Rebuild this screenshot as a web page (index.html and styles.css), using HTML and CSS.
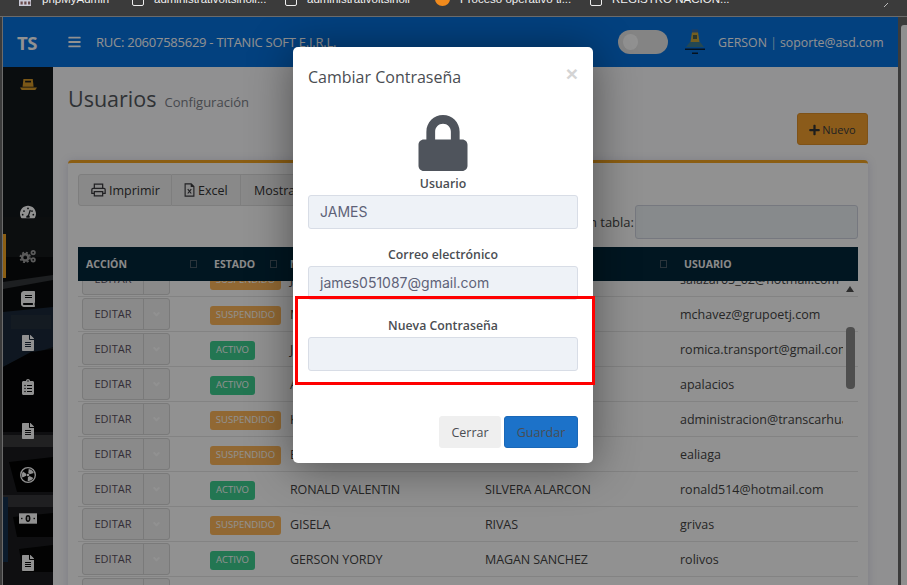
FILE: index.html
```html
<!DOCTYPE html>
<html lang="es">
<head>
  <meta charset="UTF-8" />
  <meta name="viewport" content="width=device-width, initial-scale=1.0"/>
  <title>Usuarios</title>
  <link rel="stylesheet" href="styles.css">
</head>
<body>
  <div class="bookmarks">
    <span class="bm bm-pma"><svg class="pma-icon" viewBox="0 0 16 8"><rect width="16" height="8" fill="#c9c9d6"/><rect x="2" y="2" width="3" height="4" fill="#6a4a4a"/><rect x="7" y="2" width="3" height="4" fill="#6a4a4a"/><rect x="12" y="2" width="3" height="4" fill="#6a4a4a"/></svg>phpMyAdmin</span>
    <span class="bm bm-a"><i class="bm-page"></i>administrativoitsinoli...</span>
    <span class="bm bm-b"><i class="bm-page"></i>administrativoitsinoli</span>
    <span class="bm bm-c"><i class="bm-dot"></i>Proceso operativo ti...</span>
    <span class="bm bm-d"><i class="bm-page"></i>REGISTRO NACION...</span>
    <svg class="bm-more" viewBox="0 0 8 8"><path d="M1 7 5 3" fill="none" stroke="#bbb" stroke-width="1"/></svg>
  </div>

  <div class="window">
    <div class="page">
      <header class="topbar">
        <div class="brand">TS</div>
        <svg class="burger" viewBox="0 0 448 512"><path d="M16 132h416c9 0 16-7 16-16V76c0-9-7-16-16-16H16C7 60 0 67 0 76v40c0 9 7 16 16 16zm0 160h416c9 0 16-7 16-16v-40c0-9-7-16-16-16H16c-9 0-16 7-16 16v40c0 9 7 16 16 16zm0 160h416c9 0 16-7 16-16v-40c0-9-7-16-16-16H16c-9 0-16 7-16 16v40c0 9 7 16 16 16z"/></svg>
        <div class="ruc">RUC: 20607585629 - TITANIC SOFT E.I.R.L.</div>
        <div class="toggle"><span class="knob"></span></div>
        <svg class="avatar" viewBox="0 0 24 26"><path d="M9 3h6l1.500 10h-9z" fill="#cda83a"/><rect x="9" y="0.500" width="6" height="3" fill="#3a6ea8"/><rect x="10" y="6" width="4" height="4" fill="#4d5f4a"/><path d="M7 13h10l4 5H3z" fill="#3f7f95"/><rect x="2" y="19.500" width="20" height="1.500" fill="#0a2038"/><rect x="9" y="23.500" width="6" height="1.500" fill="#0a2038"/></svg>
        <div class="who">GERSON <span class="sep">|</span> soporte@asd.com</div>
      </header>

      <div class="body">
        <aside class="side">
          <svg class="side-photo" viewBox="0 0 50 518" preserveAspectRatio="none">
            <rect width="50" height="518" fill="#13171b"/>
            <path d="M0 150H50V190H0z" fill="#16191c"/>
            <path d="M0 190H50V260H0z" fill="#0a0c0e"/>
            <path d="M0 215 50 208V213L0 222z" fill="#34373a"/>
            <path d="M0 245 50 240V280L20 290 0 300z" fill="#1b2a3a"/>
            <path d="M8 248H48V262H8z" fill="#24313c"/>
            <path d="M0 300 28 285 50 282V365H0z" fill="#050506"/>
            <path d="M0 365H50V518H0z" fill="#1b1c1f"/>
            <path d="M0 368H50V380H0z" fill="#3a3b3d"/>
            <path d="M6 395 50 390V425H14z" fill="#030303"/>
            <path d="M0 428H50V440H0z" fill="#37383a"/>
            <path d="M10 450 50 446V470H14z" fill="#050505"/>
            <path d="M16 482 50 478V505H20z" fill="#060606"/>
            <path d="M0 430H5V495H0z" fill="#14304e"/>
          </svg>
          <svg class="ico ico-ship" viewBox="0 0 20 16"><path d="M4 1h11l1 9H3z" fill="#d69a2a"/><rect x="6" y="3" width="7" height="2" fill="#1a1c1e"/><path d="M0 11h20l-2 3H2z" fill="#d69a2a"/></svg>
          <svg class="ico" viewBox="0 0 576 512"><path d="M288 32C129 32 0 161 0 320c0 53 14 102 39 145 6 9 16 15 27 15h444c11 0 21-6 27-15 25-43 39-92 39-145 0-159-129-288-288-288zm0 64c18 0 32 14 32 32s-14 32-32 32-32-14-32-32 14-32 32-32zM96 384c-18 0-32-14-32-32s14-32 32-32 32 14 32 32-14 32-32 32zm48-128c-18 0-32-14-32-32s14-32 32-32 32 14 32 32-14 32-32 32zm246-56-61 185c14 12 23 29 23 49 0 12-3 23-9 32H233c-6-9-9-20-9-32 0-35 28-63 63-64l61-185c3-8 12-13 20-10 9 3 14 12 12 20zM432 192c18 0 32 14 32 32s-14 32-32 32-32-14-32-32 14-32 32-32zm48 192c-18 0-32-14-32-32s14-32 32-32 32 14 32 32-14 32-32 32z"/></svg>
          <div class="side-active"><svg class="ico ico-dim" viewBox="0 0 26 20"><g fill="none" stroke="currentColor"><circle cx="9" cy="12" r="4.500" stroke-width="3.500"/><circle cx="9" cy="12" r="7" stroke-width="2.500" stroke-dasharray="3 2.500"/><circle cx="20.500" cy="5" r="2.500" stroke-width="2.500"/><circle cx="20.500" cy="15.500" r="2.500" stroke-width="2.500"/></g></svg></div>
          <svg class="ico" viewBox="0 0 448 512"><path d="M448 360V24c0-13-11-24-24-24H96C43 0 0 43 0 96v320c0 53 43 96 96 96h328c13 0 24-11 24-24v-16c0-8-3-14-9-19-4-15-4-59 0-73 6-5 9-11 9-20zM128 134c0-3 3-6 6-6h212c3 0 6 3 6 6v20c0 3-3 6-6 6H134c-3 0-6-3-6-6v-20zm0 64c0-3 3-6 6-6h212c3 0 6 3 6 6v20c0 3-3 6-6 6H134c-3 0-6-3-6-6v-20zm253 250H96c-18 0-32-14-32-32s14-32 32-32h285c-2 17-2 47 0 64z"/></svg>
          <svg class="ico" viewBox="0 0 384 512"><use href="#file-alt"/></svg>
          <svg class="ico" viewBox="0 0 384 512"><path d="M336 64h-80c0-35-29-64-64-64s-64 29-64 64H48C21 64 0 85 0 112v352c0 27 21 48 48 48h288c27 0 48-21 48-48V112c0-27-21-48-48-48zM96 424c-13 0-24-11-24-24s11-24 24-24 24 11 24 24-11 24-24 24zm0-96c-13 0-24-11-24-24s11-24 24-24 24 11 24 24-11 24-24 24zm0-96c-13 0-24-11-24-24s11-24 24-24 24 11 24 24-11 24-24 24zm96-192c13 0 24 11 24 24s-11 24-24 24-24-11-24-24 11-24 24-24zm128 368c0 4-4 8-8 8H168c-4 0-8-4-8-8v-16c0-4 4-8 8-8h144c4 0 8 4 8 8v16zm0-96c0 4-4 8-8 8H168c-4 0-8-4-8-8v-16c0-4 4-8 8-8h144c4 0 8 4 8 8v16zm0-96c0 4-4 8-8 8H168c-4 0-8-4-8-8v-16c0-4 4-8 8-8h144c4 0 8 4 8 8v16z"/></svg>
          <svg class="ico" viewBox="0 0 384 512"><use href="#file-alt"/></svg>
          <svg class="ico" viewBox="0 0 24 24"><circle cx="12" cy="12" r="11" fill="none" stroke="currentColor" stroke-width="2"/><circle cx="12" cy="12" r="2"/><circle cx="12" cy="12" r="6" fill="none" stroke="currentColor" stroke-width="6.500" stroke-dasharray="6.300 6.270" stroke-dashoffset="9.400"/></svg>
          <svg class="ico ico-money" viewBox="0 0 26 15"><rect width="26" height="15"/><ellipse cx="13" cy="7.500" rx="3.500" ry="5" fill="#111"/><rect x="12" y="5" width="2" height="5"/><rect x="3" y="6.500" width="2" height="2" fill="#111"/><rect x="21" y="6.500" width="2" height="2" fill="#111"/></svg>
          <svg class="ico" viewBox="0 0 384 512"><use href="#file-alt"/></svg>
        </aside>

        <main class="main">
          <div class="title-row">
            <div class="titles"><h1>Usuarios</h1><small>Configuración</small></div>
            <button class="btn-new"><svg class="plus" viewBox="0 0 448 512"><path d="M416 208H272V64c0-18-14-32-32-32h-32c-18 0-32 14-32 32v144H32c-18 0-32 14-32 32v32c0 18 14 32 32 32h144v144c0 18 14 32 32 32h32c18 0 32-14 32-32V304h144c18 0 32-14 32-32v-32c0-18-14-32-32-32z"/></svg>Nuevo</button>
          </div>

          <section class="card">
            <div class="toolbar">
              <div class="tools">
                <button class="tool tool-print"><svg class="tool-ico" viewBox="0 0 18 16"><path d="M4 6V1h10v5M4 12H1V7.500C1 6.700 1.700 6 2.500 6h13c.8 0 1.500.7 1.500 1.500V12h-3M4 10h10v5H4z" fill="none" stroke="#3a3a3e" stroke-width="1.500"/></svg>Imprimir</button>
                <button class="tool tool-excel"><svg class="tool-ico tool-ico-x" viewBox="0 0 12 16"><path d="M1 1h7l3 3v11H1zM8 1v3h3" fill="none" stroke="#3a3a3e" stroke-width="1.300"/><path d="M4 7l4 5M8 7l-4 5" stroke="#3a3a3e" stroke-width="1.300"/></svg>Excel</button>
                <button class="tool tool-show">Mostrar 10 registros</button>
              </div>
              <label class="search">Buscar en tabla:<input class="search-input" type="text"></label>
            </div>

            <div class="grid">
              <div class="grid-rows">
                <div class="row"><div class="c-acc"><div class="split"><span class="split-main">EDITAR</span><span class="split-caret"><i></i></span></div></div><div class="c-est"><span class="badge off">SUSPENDIDO</span></div><div class="c-nom">JORGE</div><div class="c-ape">SALAZAR</div><div class="c-usr">salazar05_02@hotmail.com</div></div>
                <div class="row"><div class="c-acc"><div class="split"><span class="split-main">EDITAR</span><span class="split-caret"><i></i></span></div></div><div class="c-est"><span class="badge off">SUSPENDIDO</span></div><div class="c-nom">MARIA</div><div class="c-ape">CHAVEZ PRADO</div><div class="c-usr">mchavez@grupoetj.com</div></div>
                <div class="row"><div class="c-acc"><div class="split"><span class="split-main">EDITAR</span><span class="split-caret"><i></i></span></div></div><div class="c-est"><span class="badge on">ACTIVO</span></div><div class="c-nom">JUAN</div><div class="c-ape">ROMERO</div><div class="c-usr">romica.transport@gmail.com</div></div>
                <div class="row"><div class="c-acc"><div class="split"><span class="split-main">EDITAR</span><span class="split-caret"><i></i></span></div></div><div class="c-est"><span class="badge on">ACTIVO</span></div><div class="c-nom">ANA</div><div class="c-ape">PALACIOS</div><div class="c-usr">apalacios</div></div>
                <div class="row"><div class="c-acc"><div class="split"><span class="split-main">EDITAR</span><span class="split-caret"><i></i></span></div></div><div class="c-est"><span class="badge off">SUSPENDIDO</span></div><div class="c-nom">KAREN</div><div class="c-ape">HUAMAN</div><div class="c-usr">administracion@transcarhuaz.com</div></div>
                <div class="row"><div class="c-acc"><div class="split"><span class="split-main">EDITAR</span><span class="split-caret"><i></i></span></div></div><div class="c-est"><span class="badge off">SUSPENDIDO</span></div><div class="c-nom">ELENA</div><div class="c-ape">ALIAGA</div><div class="c-usr">ealiaga</div></div>
                <div class="row"><div class="c-acc"><div class="split"><span class="split-main">EDITAR</span><span class="split-caret"><i></i></span></div></div><div class="c-est"><span class="badge on">ACTIVO</span></div><div class="c-nom">RONALD VALENTIN</div><div class="c-ape">SILVERA ALARCON</div><div class="c-usr">ronald514@hotmail.com</div></div>
                <div class="row"><div class="c-acc"><div class="split"><span class="split-main">EDITAR</span><span class="split-caret"><i></i></span></div></div><div class="c-est"><span class="badge off">SUSPENDIDO</span></div><div class="c-nom">GISELA</div><div class="c-ape">RIVAS</div><div class="c-usr">grivas</div></div>
                <div class="row"><div class="c-acc"><div class="split"><span class="split-main">EDITAR</span><span class="split-caret"><i></i></span></div></div><div class="c-est"><span class="badge on">ACTIVO</span></div><div class="c-nom">GERSON YORDY</div><div class="c-ape">MAGAN SANCHEZ</div><div class="c-usr">rolivos</div></div>
                <div class="row"><div class="c-acc"><div class="split"><span class="split-main">EDITAR</span><span class="split-caret"><i></i></span></div></div></div>
              </div>
              <div class="grid-head">
                <div class="h-acc">ACCIÓN<i class="sort"></i></div>
                <div class="h-est">ESTADO<i class="sort"></i></div>
                <div class="h-nom">NOMBRES<i class="sort"></i></div>
                <div class="h-ape">APELLIDOS<i class="sort"></i></div>
                <div class="h-usr">USUARIO</div>
              </div>
              <div class="vscroll"><span class="vscroll-up"></span><span class="vscroll-thumb"></span></div>
            </div>
          </section>
        </main>
      </div>

      <div class="backdrop">
        <div class="modal">
          <div class="modal-head">
            <h4>Cambiar Contraseña</h4>
            <span class="close">×</span>
          </div>
          <svg class="lock" viewBox="0 0 448 512"><path d="M400 224h-24v-72C376 68.2 307.8 0 224 0S72 68.2 72 152v72H48c-26.5 0-48 21.5-48 48v192c0 26.5 21.5 48 48 48h352c26.5 0 48-21.5 48-48V272c0-26.5-21.500-48-48-48zm-104 0H152v-72c0-39.700 32.300-72 72-72s72 32.300 72 72v72z"/></svg>
          <div class="field">
            <label>Usuario</label>
            <div class="input">JAMES</div>
          </div>
          <div class="field">
            <label>Correo electrónico</label>
            <div class="input">james051087@gmail.com</div>
          </div>
          <div class="field">
            <label>Nueva Contraseña</label>
            <div class="input"></div>
          </div>
          <div class="modal-foot">
            <button class="btn-close">Cerrar</button>
            <button class="btn-save">Guardar</button>
          </div>
          <div class="mark"></div>
        </div>
      </div>
    </div>
    <div class="browser-scroll"><span class="browser-thumb"></span></div>
  </div>

  <svg class="defs" width="0" height="0"><defs><path id="file-alt" d="M224 136V0H24C10.700 0 0 10.700 0 24v464c0 13.300 10.700 24 24 24h336c13.300 0 24-10.700 24-24V160H248c-13.200 0-24-10.800-24-24zm64 236c0 6.600-5.400 12-12 12H108c-6.600 0-12-5.400-12-12v-8c0-6.600 5.400-12 12-12h168c6.600 0 12 5.400 12 12v8zm0-64c0 6.600-5.400 12-12 12H108c-6.600 0-12-5.400-12-12v-8c0-6.600 5.400-12 12-12h168c6.600 0 12 5.400 12 12v8zm0-72v8c0 6.600-5.400 12-12 12H108c-6.600 0-12-5.400-12-12v-8c0-6.600 5.400-12 12-12h168c6.600 0 12 5.400 12 12zm96-114.100v6.100H256V0h6.100c6.400 0 12.500 2.500 17 7l97.900 98c4.500 4.500 7 10.600 7 16.900z"/></defs></svg>
</body>
</html>
```

FILE: styles.css
```css
* {
  box-sizing: border-box;
}

html, body {
  margin: 0;
  height: 100%;
  overflow: hidden;
}

body {
  font-family: "Noto Sans", Arial, sans-serif;
  font-size: 13px;
  background: #3b3b3b;
  display: flex;
  flex-direction: column;
}

button {
  font-family: inherit;
}

.defs {
  position: absolute;
}

/* browser bookmarks bar */
.bookmarks {
  height: 17px;
  flex: none;
  background: #3b3b3b;
  border-bottom: 1px solid #6b6b6b;
  overflow: hidden;
  display: flex;
  font-family: "Liberation Sans", Arial, sans-serif;
  font-size: 11.500px;
  color: #f0f0f0;
}

.bm {
  display: flex;
  align-items: center;
  height: 14px;
  margin-top: -8px;
  white-space: nowrap;
  flex: none;
}

.bm-pma { margin-left: 17px; width: 115px; }
.bm-a { width: 153px; }
.bm-b { width: 150px; }
.bm-c { width: 155px; }
.bm-d { width: 290px; }

.pma-icon {
  width: 16px;
  height: 6px;
  margin-right: 9px;
  align-self: flex-end;
}

.bm-page {
  width: 12px;
  height: 13px;
  border: 1px solid #eee;
  border-radius: 2px;
  margin-right: 10px;
  flex: none;
}

.bm-dot {
  width: 15px;
  height: 14px;
  border-radius: 50%;
  background: #f08a1d;
  margin-right: 10px;
  flex: none;
}

.bm-more {
  width: 8px;
  height: 8px;
  flex: none;
  margin-left: 3px;
}

/* page */
.window {
  flex: 1;
  display: flex;
  min-height: 0;
  padding-left: 2px;
}

.page {
  flex: 1;
  min-width: 0;
  display: flex;
  flex-direction: column;
  position: relative;
  overflow: hidden;
  border-left: 1px solid #6b6b6b;
}

.browser-scroll {
  width: 9px;
  flex: none;
  background: #3b3b3b;
  padding-left: 3px;
}

.browser-thumb {
  display: block;
  height: 100%;
  margin-top: 8px;
  background: #8f8f8f;
  border-radius: 3px 0 0 0;
}

.topbar {
  height: 50px;
  flex: none;
  background: #0772df;
  display: flex;
  align-items: center;
  color: #fff;
}

.brand {
  width: 65px;
  padding-left: 14px;
  font-size: 18.500px;
  font-weight: 700;
  letter-spacing: -.5px;
  font-family: "Open Sans", sans-serif;
  color: #fff;
}

.burger {
  width: 13px;
  height: 14px;
  fill: #fff;
  margin-right: 15px;
}

.ruc {
  font-size: 13px;
  flex: 1;
  font-family: "Open Sans", sans-serif;
  letter-spacing: -.25px;
}

.toggle {
  width: 50px;
  height: 24px;
  border-radius: 12px;
  background: #e8e8e8;
  padding: 3px 0 0 5px;
  margin-right: 15px;
}

.knob {
  display: block;
  width: 15px;
  height: 16px;
  margin-top: 1px;
  border-radius: 50%;
  background: #fff;
}

.avatar {
  width: 24px;
  height: 26px;
  margin-right: 11px;
}

.who {
  font-family: "Open Sans", sans-serif;
  font-size: 12.300px;
  width: 180px;
  white-space: nowrap;
}

.sep {
  font-weight: 300;
}

.body {
  flex: 1;
  display: flex;
  min-height: 0;
}

.side {
  width: 50px;
  flex: none;
  position: relative;
  overflow: hidden;
  background: #13171b;
  display: flex;
  flex-direction: column;
  align-items: center;
  color: #fff;
  padding-top: 11px;
}

.side-photo {
  position: absolute;
  left: 0;
  top: 0;
  width: 50px;
  height: 518px;
}

.ico {
  position: relative;
  width: 16px;
  height: 16px;
  fill: currentColor;
  margin-bottom: 28px;
  flex: none;
}

.ico-ship {
  width: 17px;
  height: 14px;
  margin-bottom: 112px;
}

.ico-dim {
  color: #a0a0a0;
  width: 18px;
  margin: 0;
}

.ico-money {
  width: 18px;
  height: 13px;
  margin: 1px 0 30px;
}

.side-active {
  position: relative;
  align-self: stretch;
  height: 44px;
  margin: -14px 0 13px;
  border-left: 3px solid #f5a623;
  display: flex;
  align-items: center;
  justify-content: center;
  padding-right: 3px;
  flex: none;
}

.main {
  flex: 1;
  min-width: 0;
  background: #fdfdff;
  padding: 0 30px 0 15px;
}

.title-row {
  height: 93px;
  display: flex;
  justify-content: space-between;
  padding-top: 17px;
}

.titles {
  display: flex;
  align-items: baseline;
  height: 30px;
  gap: 8px;
  color: #54585e;
}

.titles h1 {
  margin: 0;
  font-size: 21.500px;
  font-weight: 400;
  font-family: "Open Sans", sans-serif;
}

.titles small {
  font-size: 13px;
  color: #7c8088;
  font-family: "Open Sans", sans-serif;
}

.btn-new {
  width: 71px;
  height: 32px;
  margin-top: 29px;
  background: #f4a12e;
  border: 1px solid #e0902a;
  border-radius: 3px;
  color: #3a3a3e;
  font-size: 11px;
  padding: 0;
  font-family: "Open Sans", sans-serif;
}

.plus {
  width: 11px;
  height: 12px;
  fill: #333;
  vertical-align: -2px;
  margin-right: 2px;
}

.card {
  height: 500px;
  background: #fff;
  border-top: 3px solid #f5a623;
  border-radius: 4px 4px 0 0;
  padding: 11px 10px 0;
  box-shadow: 0 1px 10px rgba(60, 60, 120, .18);
}

.toolbar {
  height: 73px;
  display: flex;
  justify-content: space-between;
}

.tools {
  display: flex;
  height: 32px;
}

.tool {
  height: 32px;
  background: #f1f1f1;
  border: 1px solid #dedede;
  border-left-width: 0;
  font-size: 12.500px;
  color: #333;
  padding: 0;
  font-family: "Open Sans", sans-serif;
  white-space: nowrap;
  text-align: left;
  display: flex;
  align-items: center;
}

.tool-print { width: 94px; border-left-width: 1px; border-radius: 3px 0 0 3px; padding-left: 12px; }
.tool-excel { width: 69px; padding-left: 12px; }
.tool-show { width: 150px; padding-left: 13px; }

.tool-ico {
  width: 15px;
  height: 14px;
  margin-right: 3px;
}

.tool-ico-x {
  width: 11px;
}

.search {
  align-self: flex-end;
  display: flex;
  align-items: center;
  font-family: "Open Sans", sans-serif;
  color: #444;
  margin-bottom: 8px;
  height: 34px;
}

.search-input {
  width: 223px;
  height: 34px;
  margin-left: 1px;
  border: 1px solid #d0d4e0;
  border-radius: 3px;
  background: #eef2f7;
}

.grid {
  position: relative;
  height: 340px;
  overflow: hidden;
}

.grid-head {
  position: absolute;
  left: 0;
  top: 0;
  right: 0;
  height: 34px;
  background: #03273a;
  color: #f2f2f2;
  font-size: 10.500px;
  font-weight: 700;
  display: flex;
  align-items: center;
  font-family: "Open Sans", sans-serif;
}

.grid-head > div {
  display: flex;
  align-items: center;
  justify-content: space-between;
  padding-left: 8px;
  flex: none;
}

.sort {
  width: 7px;
  height: 8px;
  border: 1px solid #4a5c68;
}

.h-acc { width: 128px; padding-right: 9px; }
.h-est { width: 76px; padding-right: 5px; }
.h-nom { width: 195px; padding-right: 5px; }
.h-ape { width: 195px; padding-right: 5px; }
.h-usr { flex: 1 !important; padding-left: 12px !important; }

.grid-rows {
  padding-top: 15px;
}

.row {
  height: 35px;
  border-bottom: 1px solid #e6e6e6;
  display: flex;
  align-items: center;
  font-family: "Open Sans", sans-serif;
  font-size: 12.500px;
  color: #444;
  white-space: nowrap;
}

.c-acc { width: 128px; padding-left: 4px; }
.c-est { width: 76px; padding-left: 4px; padding-top: 1px; }
.c-nom { width: 195px; padding-left: 8px; letter-spacing: -.1px; }
.c-ape { width: 195px; padding-left: 8px; letter-spacing: -.1px; }
.c-usr { width: 171px; padding-left: 8px; overflow: hidden; }

.split {
  width: 88px;
  height: 32px;
  display: flex;
  border: 1px solid #d6d6d6;
  border-radius: 3px;
  background: #f2f2f2;
  font-size: 11px;
  color: #5a5060;
}

.split-main {
  width: 61px;
  text-align: center;
  line-height: 30px;
  border-right: 1px solid #d6d6d6;
}

.split-caret {
  flex: 1;
  display: flex;
  align-items: center;
  justify-content: center;
}

.split-caret i {
  width: 5px;
  height: 5px;
  border: solid #fff;
  border-width: 0 2px 2px 0;
  transform: rotate(45deg) translate(-1px, -1px);
}

.badge {
  display: inline-block;
  height: 19px;
  line-height: 18px;
  border-radius: 3px;
  color: #fff;
  font-size: 9.500px;
  text-align: center;
}

.badge.off {
  background: #ffb85a;
  width: 71px;
}

.badge.on {
  background: #3ecf91;
  width: 45px;
}

.vscroll {
  position: absolute;
  left: 768px;
  top: 34px;
  width: 9px;
  bottom: 0;
}

.vscroll-up {
  position: absolute;
  left: 0;
  top: 5px;
  border: 4.500px solid transparent;
  border-top-width: 0;
  border-bottom: 6px solid #505050;
}

.vscroll-thumb {
  position: absolute;
  left: 0;
  top: 46px;
  width: 9px;
  height: 62px;
  border-radius: 4px;
  background: #8a8a8a;
}

/* modal */
.backdrop {
  position: absolute;
  inset: 0;
  background: rgba(0, 0, 0, .43);
  padding: 30px 0 0 290px;
}

.modal {
  position: relative;
  width: 300px;
  height: 416px;
  background: #fff;
  border-radius: 5px;
  padding: 15px;
  box-shadow: 0 4px 45px rgba(0, 0, 0, .45);
  text-align: center;
  color: #4a4d52;
}

.modal-head {
  display: flex;
  justify-content: space-between;
  height: 53px;
}

.modal-head h4 {
  margin: 4px 0 0;
  font-size: 16px;
  font-weight: 400;
  font-family: "Open Sans", sans-serif;
}

.close {
  font-size: 21px;
  font-weight: 700;
  color: #d4d4d4;
  line-height: 24px;
  font-family: "Liberation Sans", sans-serif;
}

.lock {
  display: block;
  width: 50px;
  height: 56px;
  margin: 0 auto;
  fill: #4f545c;
}

.field {
  height: 71px;
}

.field label {
  display: block;
  height: 24px;
  font-size: 12.300px;
  font-weight: 600;
  line-height: 25px;
  font-family: "Open Sans", sans-serif;
}

.input {
  height: 34px;
  background: #eef2f7;
  border: 1px solid #d8dde6;
  border-radius: 3px;
  text-align: left;
  padding-left: 11px;
  font-size: 14px;
  line-height: 32px;
  color: #5e6278;
  font-family: Inter, sans-serif;
}

.modal-foot {
  display: flex;
  justify-content: flex-end;
  gap: 3px;
  margin-top: 32px;
}

.btn-close, .btn-save {
  height: 32px;
  border-radius: 3px;
  font-size: 12.500px;
  padding: 0;
  color: #4a4d52;
  font-family: "Open Sans", sans-serif;
}

.btn-close {
  width: 62px;
  background: #efefef;
  border: 1px solid #efefef;
}

.btn-save {
  width: 74px;
  background: #1c72c9;
  border: 1px solid #1a68b8;
}

.mark {
  position: absolute;
  left: 2px;
  top: 249px;
  width: 300px;
  height: 89px;
  border: 3px solid #f00;
}
```
